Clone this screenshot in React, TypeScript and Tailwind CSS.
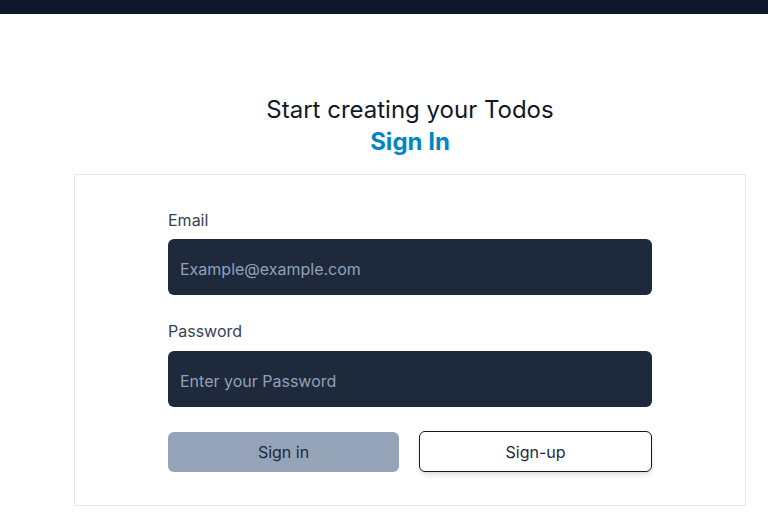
export default function App() {
  return (
    <div className="min-h-screen bg-white font-['Inter',sans-serif]">
      <div className="h-[14px] bg-[#0f172a]" />

      <div className="mt-[80px] flex flex-col items-center pl-[52px]">
        <h1 className="text-2xl leading-8 font-normal text-gray-900">Start creating your Todos</h1>
        <h2 className="text-2xl leading-8 font-bold text-[#0284c7]">Sign In</h2>
      </div>

      <div className="ml-[74px] mt-4 w-[672px] border border-gray-200 px-[93px] pt-[35px] pb-[33px]">
        <form className="flex flex-col" onSubmit={(e) => e.preventDefault()}>
          <label className="text-base leading-5 text-gray-700">Email</label>
          <input
            type="email"
            placeholder="Example@example.com"
            className="mt-[9px] h-14 w-full rounded-md bg-[#1e293b] px-3 pt-[3px] text-base text-white placeholder:text-slate-400 outline-none"
          />

          <label className="mt-[26px] text-base leading-5 text-gray-700">Password</label>
          <input
            type="password"
            placeholder="Enter your Password"
            className="mt-[10px] h-14 w-full rounded-md bg-[#1e293b] px-3 pt-[3px] text-base text-white placeholder:text-slate-400 outline-none"
          />

          <div className="mt-[25px] flex gap-5">
            <button
              type="submit"
              className="h-10 flex-1 rounded-md bg-[#94a3b8] text-base text-slate-800"
            >
              Sign in
            </button>
            <button
              type="button"
              className="-mt-px h-[41px] flex-1 rounded-md border border-slate-900 bg-white text-base text-slate-800 shadow-md"
            >
              Sign-up
            </button>
          </div>
        </form>
      </div>
    </div>
  );
}
